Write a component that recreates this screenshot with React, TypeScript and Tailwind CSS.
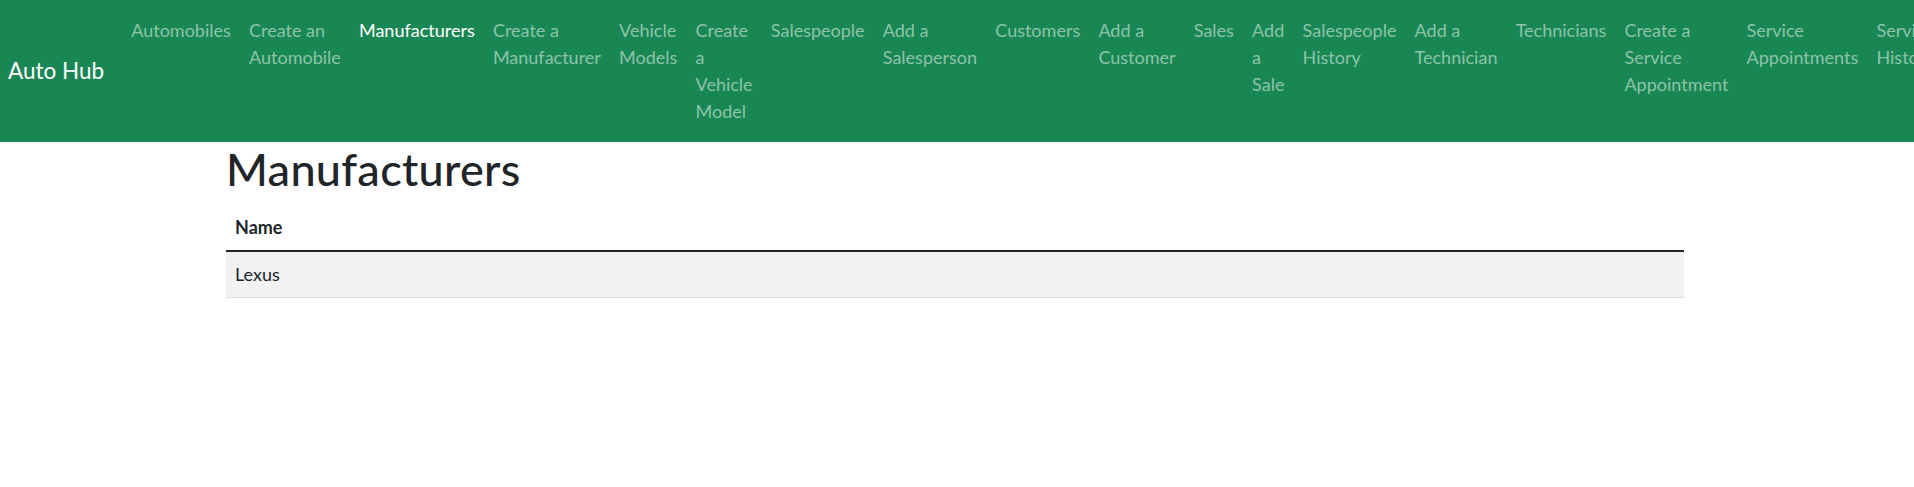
import React from 'react';

const links: { lines: string[]; active?: boolean }[] = [
  { lines: ['Automobiles'] },
  { lines: ['Create an', 'Automobile'] },
  { lines: ['Manufacturers'], active: true },
  { lines: ['Create a', 'Manufacturer'] },
  { lines: ['Vehicle', 'Models'] },
  { lines: ['Create', 'a', 'Vehicle', 'Model'] },
  { lines: ['Salespeople'] },
  { lines: ['Add a', 'Salesperson'] },
  { lines: ['Customers'] },
  { lines: ['Add a', 'Customer'] },
  { lines: ['Sales'] },
  { lines: ['Add', 'a', 'Sale'] },
  { lines: ['Salespeople', 'History'] },
  { lines: ['Add a', 'Technician'] },
  { lines: ['Technicians'] },
  { lines: ['Create a', 'Service', 'Appointment'] },
  { lines: ['Service', 'Appointments'] },
  { lines: ['Service', 'History'] },
];

const Navbar = () => {
  return (
    <nav className="bg-[#198754] w-full overflow-hidden">
      <div className="flex items-center py-[8px] pl-[8px]">
        <a href="#" className="text-white text-[22.5px] leading-[34px] mr-[18px] whitespace-nowrap flex-none">
          Auto Hub
        </a>
        <ul className="flex self-stretch items-start">
          {links.map((link, i) => (
            <li key={i} className="flex-none">
              <a
                href="#"
                className={
                  'block px-[9.1px] py-[9px] text-[18px] leading-[27px] whitespace-nowrap ' +
                  (link.active ? 'text-white' : 'text-[#8cc3a9]')
                }
              >
                {link.lines.map((line, j) => (
                  <span key={j} className="block">
                    {line}
                  </span>
                ))}
              </a>
            </li>
          ))}
        </ul>
      </div>
    </nav>
  );
};

export default function App() {
  return (
    <div className="min-h-screen bg-white text-[#212529] font-['Lato','Liberation_Sans',sans-serif]">
      <Navbar />
      <div className="w-[1485px] mx-auto pl-[11.5px] pr-[15.5px]">
        <h1 className="text-[45px] leading-[54px] font-medium tracking-[0.3px] mb-[9px]">Manufacturers</h1>
        <table className="w-full text-[18px] leading-[27px] border-collapse">
          <thead>
            <tr className="border-b-2 border-[#212529]">
              <th className="text-left font-bold p-[9px]">Name</th>
            </tr>
          </thead>
          <tbody>
            <tr className="bg-[#f2f2f2] border-b border-[#dee2e6]">
              <td className="p-[9px]">Lexus</td>
            </tr>
          </tbody>
        </table>
      </div>
    </div>
  );
}
